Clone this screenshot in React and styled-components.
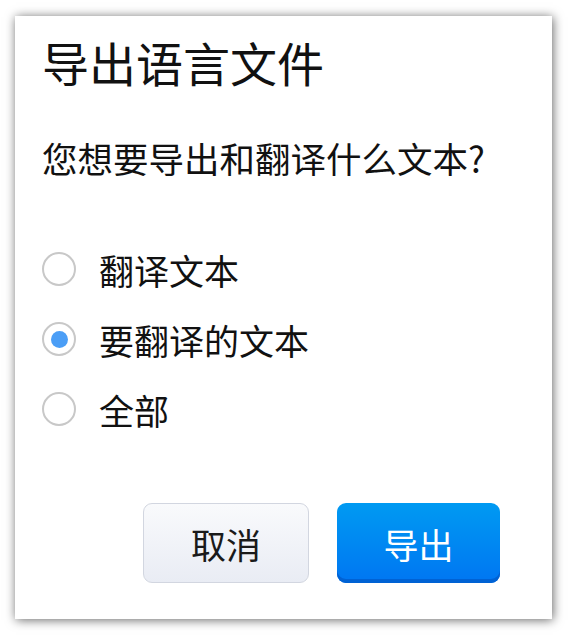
import React, { useState } from "react"
import styled, { createGlobalStyle } from "styled-components"

const GlobalStyle = createGlobalStyle`
    html, body {
        margin: 0;
        padding: 0;
        background: #ffffff;
    }
    body {
        font-family: "Noto Sans CJK SC", "Noto Sans", sans-serif;
    }
`

const Page = styled.div`
    width: 568px;
    height: 636px;
    padding: 16px 16px 17px 15px;
    box-sizing: border-box;
`

const Dialog = styled.div`
    width: 537px;
    height: 603px;
    box-sizing: border-box;
    background: #ffffff;
    box-shadow: 1px 1px 10px rgba(0, 0, 0, 0.6);
    padding: 16px 27px 0 27px;
    display: flex;
    flex-direction: column;
`

const Title = styled.h1`
    margin: 0;
    font-size: 47px;
    font-weight: 400;
    line-height: 60px;
    color: #111;
`

const Question = styled.p`
    margin: 44px 0 0 0;
    font-size: 35.5px;
    line-height: 44px;
    color: #111;
`

const Options = styled.div`
    margin-top: 54px;
    display: flex;
    flex-direction: column;
`

const Option = styled.label`
    display: flex;
    align-items: center;
    gap: 23px;
    height: 70px;
    cursor: pointer;
    font-size: 35px;
    color: #111;
`

const Radio = styled.span`
    width: 34px;
    height: 34px;
    box-sizing: border-box;
    border-radius: 50%;
    border: 2px solid #c8c8c8;
    background: #fff;
    display: flex;
    align-items: center;
    justify-content: center;
    flex-shrink: 0;

    &::after {
        content: "";
        width: 17px;
        height: 17px;
        border-radius: 50%;
        background: ${p => (p.$checked ? "#4b9ef6" : "transparent")};
    }
`

const Footer = styled.div`
    margin-top: auto;
    margin-bottom: 36px;
    display: flex;
    gap: 28px;
    padding-left: 101px;
`

const Button = styled.button`
    width: ${p => (p.$primary ? "163px" : "166px")};
    height: 80px;
    box-sizing: border-box;
    border-radius: 9px;
    font-family: inherit;
    font-size: 35px;
    cursor: pointer;
    border: ${p => (p.$primary ? "none" : "1.5px solid #d2d6e0")};
    color: ${p => (p.$primary ? "#ffffff" : "#1a1a1a")};
    background: ${p =>
        p.$primary
            ? "linear-gradient(#009af2, #0076f2)"
            : "linear-gradient(#f9fafc, #e9ecf4)"};
    box-shadow: ${p => (p.$primary ? "inset 0 -4px 0 #0062d4" : "none")};
`

const options = ["翻译文本", "要翻译的文本", "全部"]

export default function App() {
    const [selected, setSelected] = useState(1)

    return (
        <Page>
            <GlobalStyle />
            <Dialog>
                <Title>导出语言文件</Title>
                <Question>您想要导出和翻译什么文本?</Question>
                <Options>
                    {options.map((text, i) => (
                        <Option key={text} onClick={() => setSelected(i)}>
                            <Radio $checked={selected === i} />
                            {text}
                        </Option>
                    ))}
                </Options>
                <Footer>
                    <Button>取消</Button>
                    <Button $primary>导出</Button>
                </Footer>
            </Dialog>
        </Page>
    )
}
